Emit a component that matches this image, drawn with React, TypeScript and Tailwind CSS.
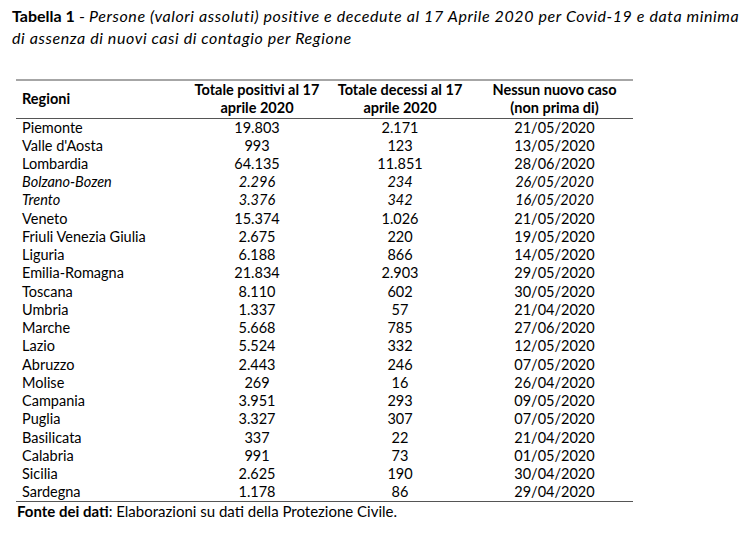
const rows: [string, string, string, string, boolean?][] = [
  ['Piemonte', '19.803', '2.171', '21/05/2020'],
  ["Valle d'Aosta", '993', '123', '13/05/2020'],
  ['Lombardia', '64.135', '11.851', '28/06/2020'],
  ['Bolzano-Bozen', '2.296', '234', '26/05/2020', true],
  ['Trento', '3.376', '342', '16/05/2020', true],
  ['Veneto', '15.374', '1.026', '21/05/2020'],
  ['Friuli Venezia Giulia', '2.675', '220', '19/05/2020'],
  ['Liguria', '6.188', '866', '14/05/2020'],
  ['Emilia-Romagna', '21.834', '2.903', '29/05/2020'],
  ['Toscana', '8.110', '602', '30/05/2020'],
  ['Umbria', '1.337', '57', '21/04/2020'],
  ['Marche', '5.668', '785', '27/06/2020'],
  ['Lazio', '5.524', '332', '12/05/2020'],
  ['Abruzzo', '2.443', '246', '07/05/2020'],
  ['Molise', '269', '16', '26/04/2020'],
  ['Campania', '3.951', '293', '09/05/2020'],
  ['Puglia', '3.327', '307', '07/05/2020'],
  ['Basilicata', '337', '22', '21/04/2020'],
  ['Calabria', '991', '73', '01/05/2020'],
  ['Sicilia', '2.625', '190', '30/04/2020'],
  ['Sardegna', '1.178', '86', '29/04/2020'],
];

const App = () => {
  return (
    <div className="w-[750px] h-[541px] bg-white text-black font-['Lato',sans-serif] overflow-hidden">
      {/* Caption */}
      <div className="pl-[12px] pt-[5px] text-[16px] leading-[22px] whitespace-nowrap">
        <span className="font-bold">Tabella 1</span> -{' '}
        <span className="italic tracking-[0.6px]">
          Persone (valori assoluti) positive e decedute al 17 Aprile 2020 per Covid-19 e data minima
          <br />
          di assenza di nuovi casi di contagio per Regione
        </span>
      </div>

      <table className="mt-[30px] ml-[16px] w-[617px] border-collapse text-[14.5px]">
        <thead>
          <tr className="border-t-2 border-t-[#a6a6a6] border-b border-b-[#555]">
            <th className="w-[174px] h-[38px] pl-[6px] text-left font-bold leading-[18px] align-middle">Regioni</th>
            <th className="w-[134px] font-bold leading-[18px] text-center">
              Totale positivi al 17
              <br />
              aprile 2020
            </th>
            <th className="w-[152px] font-bold leading-[18px] text-center">
              Totale decessi al 17
              <br />
              aprile 2020
            </th>
            <th className="font-bold leading-[18px] text-center">
              Nessun nuovo caso
              <br />
              (non prima di)
            </th>
          </tr>
        </thead>
        <tbody className="border-b border-b-[#555]">
          {rows.map(([name, pos, dec, date, it]) => (
            <tr key={name} className={`h-[18.25px] leading-[18px] ${it ? 'italic' : ''}`}>
              <td className="pl-[6px] p-0">{name}</td>
              <td className="text-center p-0">{pos}</td>
              <td className="text-center p-0">{dec}</td>
              <td className="text-center p-0">{date}</td>
            </tr>
          ))}
        </tbody>
      </table>

      <div className="pl-[17px] text-[15px] leading-[18px]">
        <span className="font-bold">Fonte dei dati</span>: Elaborazioni su dati della Protezione Civile.
      </div>
    </div>
  );
};

export default App;
